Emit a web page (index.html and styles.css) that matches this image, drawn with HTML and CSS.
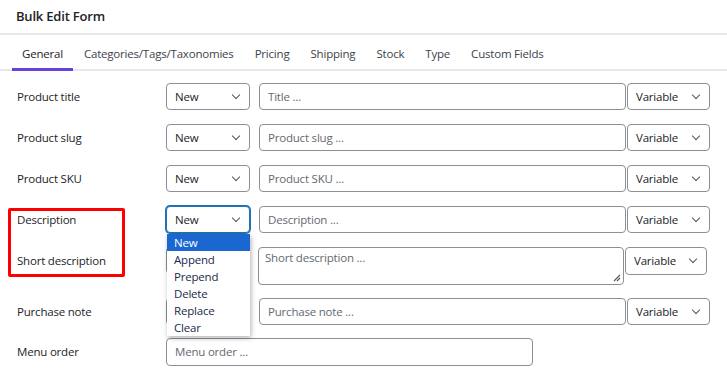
FILE: index.html
```html
<!DOCTYPE html>
<html lang="en">
<head>
    <meta charset="UTF-8">
    <meta name="viewport" content="width=device-width, initial-scale=1.0">
    <title>Bulk Edit Form</title>
    <link rel="stylesheet" href="styles.css">
</head>
<body>
    <div class="bulk-edit">
        <div class="form-title">Bulk Edit Form</div>

        <div class="tabs">
            <div class="tab active">General</div>
            <div class="tab">Categories/Tags/Taxonomies</div>
            <div class="tab">Pricing</div>
            <div class="tab">Shipping</div>
            <div class="tab">Stock</div>
            <div class="tab">Type</div>
            <div class="tab">Custom Fields</div>
        </div>

        <div class="fields">
            <div class="field-row">
                <div class="field-label">Product title</div>
                <div class="select action">New</div>
                <div class="text-input">Title ...</div>
                <div class="select variable">Variable</div>
            </div>

            <div class="field-row">
                <div class="field-label">Product slug</div>
                <div class="select action">New</div>
                <div class="text-input">Product slug ...</div>
                <div class="select variable">Variable</div>
            </div>

            <div class="field-row">
                <div class="field-label">Product SKU</div>
                <div class="select action">New</div>
                <div class="text-input">Product SKU ...</div>
                <div class="select variable">Variable</div>
            </div>

            <div class="field-row">
                <div class="field-label">Description</div>
                <div class="action-wrap">
                    <div class="select action focused">New</div>
                    <!-- opened list of the focused select -->
                    <ul class="select-list">
                        <li class="selected">New</li>
                        <li>Append</li>
                        <li>Prepend</li>
                        <li>Delete</li>
                        <li>Replace</li>
                        <li>Clear</li>
                    </ul>
                </div>
                <div class="text-input">Description ...</div>
                <div class="select variable">Variable</div>
            </div>

            <div class="field-row tall">
                <div class="field-label">Short description</div>
                <!-- hidden under the open list -->
                <div class="select action"></div>
                <div class="text-area">
                    Short description ...
                    <svg class="grip" width="9" height="9" viewBox="0 0 9 9">
                        <path d="M8 2 L2 8 M8 5 L5 8" stroke="#555" stroke-width="1.1" fill="none"/>
                    </svg>
                </div>
                <div class="select variable short">Variable</div>
            </div>

            <div class="field-row before-last">
                <div class="field-label">Purchase note</div>
                <div class="select action"></div>
                <div class="text-input">Purchase note ...</div>
                <div class="select variable">Variable</div>
            </div>

            <div class="field-row">
                <div class="field-label">Menu order</div>
                <div class="text-input menu-order">Menu order ...</div>
            </div>

            <div class="highlight-box"></div>
        </div>
    </div>
</body>
</html>
```

FILE: styles.css
```css
body {
    margin: 0;
    background: #ffffff;
    font-family: 'Open Sans', 'Noto Sans', sans-serif;
    font-size: 11.5px;
    letter-spacing: -0.2px;
    color: #1d2327;
}

.bulk-edit {
    width: 727px;
}

.form-title {
    height: 33px;
    line-height: 32px;
    padding-left: 16px;
    font-size: 13px;
    font-weight: 600;
    border-bottom: 2px solid #e8e8e8;
}

.tabs {
    display: flex;
    height: 34px;
    padding-left: 12px;
    border-bottom: 2px solid #e8e8e8;
}

.tab {
    padding: 0 10.5px;
    line-height: 37px;
    color: #3c434a;
}

.tab.active {
    padding-left: 10px;
    color: #1d2327;
    border-bottom: 3px solid #6741d9;
    margin-bottom: -2px;
}

.fields {
    position: relative;
    padding: 12px 0 0 17px;
}

.field-row {
    display: flex;
    align-items: flex-start;
    height: 27px;
    margin-bottom: 14px;
}

.field-row.tall {
    height: 38px;
    margin-bottom: 13px;
}

.field-row.before-last {
    margin-bottom: 13px;
}

.field-label {
    width: 149px;
    line-height: 28px;
}

.select {
    position: relative;
    box-sizing: border-box;
    height: 27px;
    line-height: 25px;
    border: 1px solid #8c8f94;
    border-radius: 4px;
    padding-left: 8px;
    background: #fff;
}

.select::after {
    content: "";
    position: absolute;
    right: 10px;
    top: 8px;
    width: 5px;
    height: 5px;
    border-right: 1.2px solid #50575e;
    border-bottom: 1.2px solid #50575e;
    transform: rotate(45deg);
}

.select.action {
    width: 84px;
}

.select.focused {
    border-color: #2271b1;
    box-shadow: 0 0 0 1px #2271b1;
}

.action-wrap {
    position: relative;
    width: 84px;
}

.select-list {
    position: absolute;
    top: 28px;
    left: 1px;
    z-index: 2;
    width: 83px;
    margin: 0;
    padding: 0;
    list-style: none;
    background: #fff;
    box-shadow: 1px 2px 5px rgba(0, 0, 0, 0.3);
}

.select-list li {
    height: 17px;
    line-height: 17px;
    padding-left: 7px;
    color: #1d2a4a;
}

.select-list li.selected {
    background: #1a67d2;
    color: #fff;
}

.text-input,
.text-area {
    box-sizing: border-box;
    height: 27px;
    width: 367px;
    margin-left: 9px;
    line-height: 25px;
    padding-left: 8px;
    border: 1px solid #8c8f94;
    border-radius: 4px;
    color: #646970;
}

.text-area {
    position: relative;
    height: 38px;
    width: 366px;
    margin-left: 8px;
    line-height: 20px;
    padding-left: 6px;
}

.grip {
    position: absolute;
    right: 2px;
    bottom: 2px;
}

.select.variable {
    width: 83px;
    margin-left: 1px;
}

.select.variable.short {
    width: 82px;
    height: 28px;
}

.text-input.menu-order {
    width: 367px;
    height: 28px;
    margin-left: 0;
}

.highlight-box {
    position: absolute;
    left: 8px;
    top: 137px;
    width: 111px;
    height: 63px;
    border: 3px solid #ff0000;
    border-radius: 2px;
}
```
